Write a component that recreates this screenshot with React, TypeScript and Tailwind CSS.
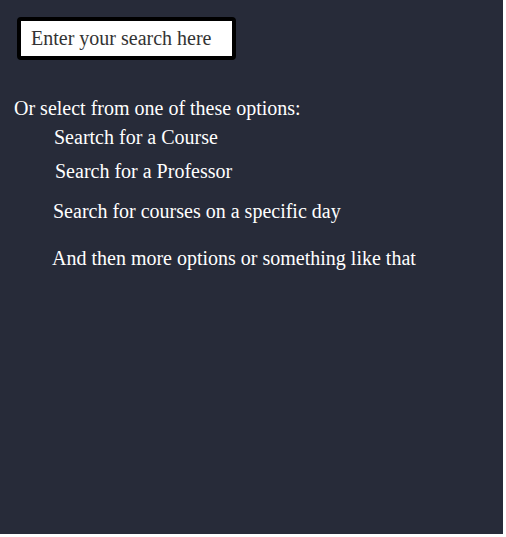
const OPTIONS = [
  { label: 'Seartch for a Course', cls: 'mt-[7px] pl-[54px]' },
  { label: 'Search for a Professor', cls: 'mt-[12px] pl-[55px]' },
  { label: 'Search for courses on a specific day', cls: 'mt-[18px] pl-[53px]' },
  { label: 'And then more options or something like that', cls: 'mt-[25px] pl-[52px]' },
]

export default function App() {
  return (
    <div className="bg-white w-[506px] h-[537px]">
      <div className="w-[503px] h-[534px] bg-[#272b39] text-white font-['Liberation_Serif',serif] text-[20px] leading-[22px] pt-[17px]">
        <div className="pl-[17px]">
          <input
            type="text"
            placeholder="Enter your search here"
            className="w-[219px] h-[43px] bg-white border-4 border-black rounded-[4px] px-[10px] text-[20px] text-[#333] placeholder:text-[#333] outline-none font-['Liberation_Serif',serif]"
          />
        </div>
        <p className="mt-[37px] pl-[14px]">Or select from one of these options:</p>
        {OPTIONS.map(o => (
          <p key={o.label} className={o.cls}>{o.label}</p>
        ))}
      </div>
    </div>
  )
}
